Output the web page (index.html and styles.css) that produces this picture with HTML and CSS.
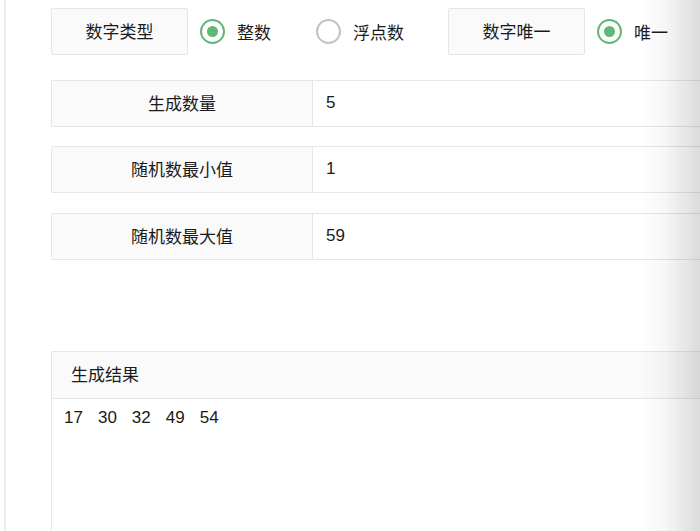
FILE: index.html
```html
<!DOCTYPE html>
<html lang="zh-CN">
<head>
<meta charset="utf-8">
<title>随机数生成</title>
<link rel="stylesheet" href="styles.css">
</head>
<body>
<div class="page">
  <div class="type-row">
    <div class="tag">数字类型</div>
    <label class="radio checked first"><span class="dot"></span><span class="rtext">整数</span></label>
    <label class="radio"><span class="dot"></span><span class="rtext">浮点数</span></label>
    <div class="tag tag-gap">数字唯一</div>
    <label class="radio checked first"><span class="dot"></span><span class="rtext">唯一</span></label>
  </div>

  <div class="field f1">
    <div class="flabel">生成数量</div>
    <div class="fvalue">5</div>
  </div>
  <div class="field f2">
    <div class="flabel">随机数最小值</div>
    <div class="fvalue">1</div>
  </div>
  <div class="field f3">
    <div class="flabel">随机数最大值</div>
    <div class="fvalue">59</div>
  </div>

  <div class="panel">
    <div class="panel-head">生成结果</div>
    <div class="panel-body">
      <span class="num">17</span><span class="num">30</span><span class="num">32</span><span class="num">49</span><span class="num">54</span>
    </div>
  </div>
</div>
<div class="edge-shadow"></div>
</body>
</html>
```

FILE: styles.css
```css
html, body {
  margin: 0;
  padding: 0;
  background: #fff;
  overflow: hidden;
  height: 100%;
}
body {
  font-family: "Liberation Sans", "Noto Sans CJK SC", sans-serif;
  font-size: 17px;
  color: #1a1a1a;
}
.page {
  margin-left: 4px;
  border-left: 2px solid #eeeeee;
  padding: 8px 0 0 45px;
  height: 100%;
  box-sizing: border-box;
  display: flex;
  flex-direction: column;
}
.type-row {
  display: flex;
  align-items: center;
  height: 47px;
  flex: none;
}
.tag {
  box-sizing: border-box;
  width: 137px;
  height: 47px;
  border: 1px solid #e6e6e6;
  border-radius: 2px;
  background: #fafafa;
  display: flex;
  align-items: center;
  justify-content: center;
  padding-bottom: 2px;
}
.tag-gap {
  margin-left: 44px;
}
.radio {
  display: flex;
  align-items: center;
  margin-left: 45px;
}
.radio.first {
  margin-left: 12px;
}
.dot {
  box-sizing: border-box;
  width: 25px;
  height: 25px;
  border: 2px solid #c2c2c2;
  border-radius: 50%;
  display: flex;
  align-items: center;
  justify-content: center;
}
.radio.checked .dot {
  border-color: #5fb878;
}
.radio.checked .dot::after {
  content: "";
  width: 11px;
  height: 11px;
  border-radius: 50%;
  background: #5fb878;
}
.rtext {
  margin-left: 12px;
}
.field {
  display: flex;
  flex: none;
  box-sizing: border-box;
  height: 47px;
  border: 1px solid #e6e6e6;
  border-right: none;
  border-radius: 2px 0 0 2px;
}
.f1 { margin-top: 25px; }
.f2 { margin-top: 19px; }
.f3 { margin-top: 20px; }
.flabel {
  width: 260px;
  background: #fafafa;
  border-right: 1px solid #e6e6e6;
  display: flex;
  align-items: center;
  justify-content: center;
  padding-bottom: 2px;
}
.fvalue {
  display: flex;
  align-items: center;
  padding-left: 13px;
  padding-bottom: 1px;
}
.panel {
  margin-top: 91px;
  flex: 1;
  min-height: 0;
  border: 1px solid #e6e6e6;
  border-right: none;
  border-bottom: none;
  border-radius: 2px 0 0 0;
}
.panel-head {
  box-sizing: border-box;
  height: 47px;
  background: #fafafa;
  border-bottom: 1px solid #e6e6e6;
  display: flex;
  align-items: center;
  padding: 0 0 4px 19px;
}
.panel-body {
  padding: 8px 12px;
  line-height: 22px;
}
.num {
  margin-right: 15px;
}
.edge-shadow {
  position: absolute;
  top: 0;
  right: 0;
  width: 60px;
  height: 100%;
  background: linear-gradient(to right, rgba(0,0,0,0), rgba(0,0,0,0.03) 40%, rgba(0,0,0,0.14));
  pointer-events: none;
}
```
